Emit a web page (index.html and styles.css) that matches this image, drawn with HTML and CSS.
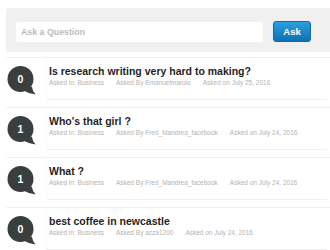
FILE: index.html
```html
<!DOCTYPE html>
<html lang="en">
<head>
    <meta charset="UTF-8">
    <meta name="viewport" content="width=device-width, initial-scale=1.0">
    <title>Questions</title>
    <link rel="stylesheet" href="styles.css">
</head>
<body>
    <div class="wrap">
        <form class="ask-box">
            <input type="text" class="ask-input" placeholder="Ask a Question">
            <button type="button" class="ask-btn">Ask</button>
        </form>

        <ul class="questions">
            <li class="question">
                <svg class="count" width="29" height="29" viewBox="0 0 29 29">
                    <circle cx="13.5" cy="13" r="13" fill="#3b3e3e"/>
                    <path d="M17 24.8 Q22.5 28.2 28.6 28.6 Q25.6 25.8 24.8 20.5 Z" fill="#3b3e3e"/>
                    <text x="13.5" y="16.8" text-anchor="middle">0</text>
                </svg>
                <div class="body">
                    <h2 class="title">Is research writing very hard to making?</h2>
                    <div class="meta">
                        <span>Asked in: Business</span>
                        <span>Asked By Emanuelmaruio</span>
                        <span>Asked on July 25, 2016</span>
                    </div>
                </div>
            </li>
            <li class="question">
                <svg class="count" width="29" height="29" viewBox="0 0 29 29">
                    <circle cx="13.5" cy="13" r="13" fill="#3b3e3e"/>
                    <path d="M17 24.8 Q22.5 28.2 28.6 28.6 Q25.6 25.8 24.8 20.5 Z" fill="#3b3e3e"/>
                    <text x="13.5" y="16.8" text-anchor="middle">1</text>
                </svg>
                <div class="body">
                    <h2 class="title">Who's that girl ?</h2>
                    <div class="meta">
                        <span>Asked in: Business</span>
                        <span>Asked By Fred_Mandrea_facebook</span>
                        <span>Asked on July 24, 2016</span>
                    </div>
                </div>
            </li>
            <li class="question">
                <svg class="count" width="29" height="29" viewBox="0 0 29 29">
                    <circle cx="13.5" cy="13" r="13" fill="#3b3e3e"/>
                    <path d="M17 24.8 Q22.5 28.2 28.6 28.6 Q25.6 25.8 24.8 20.5 Z" fill="#3b3e3e"/>
                    <text x="13.5" y="16.8" text-anchor="middle">1</text>
                </svg>
                <div class="body">
                    <h2 class="title">What ?</h2>
                    <div class="meta">
                        <span>Asked in: Business</span>
                        <span>Asked By Fred_Mandrea_facebook</span>
                        <span>Asked on July 24, 2016</span>
                    </div>
                </div>
            </li>
            <li class="question">
                <svg class="count" width="29" height="29" viewBox="0 0 29 29">
                    <circle cx="13.5" cy="13" r="13" fill="#3b3e3e"/>
                    <path d="M17 24.8 Q22.5 28.2 28.6 28.6 Q25.6 25.8 24.8 20.5 Z" fill="#3b3e3e"/>
                    <text x="13.5" y="16.8" text-anchor="middle">0</text>
                </svg>
                <div class="body">
                    <h2 class="title">best coffee in newcastle</h2>
                    <div class="meta">
                        <span>Asked in: Business</span>
                        <span>Asked By azza1200</span>
                        <span>Asked on July 24, 2016</span>
                    </div>
                </div>
            </li>
        </ul>
    </div>
</body>
</html>
```

FILE: styles.css
```css
html, body {
    margin: 0;
    padding: 0;
    background: #fff;
    overflow: hidden;
}
body {
    font-family: "Liberation Sans", Arial, sans-serif;
}
.wrap {
    padding: 8px 0 0 6px;
}
.ask-box {
    display: flex;
    align-items: flex-end;
    gap: 10px;
    margin: 0 -10px 5px 0;
    padding: 13px 0 10px 10px;
    background: #f0f0f0;
    border-radius: 3px;
}
.ask-input {
    width: 247px;
    height: 20px;
    box-sizing: border-box;
    padding: 0 5px;
    border: none;
    border-radius: 2px;
    background: #fff;
    font-family: inherit;
    font-size: 8.8px;
    font-weight: bold;
    outline: none;
}
.ask-input::placeholder {
    color: #bcbcbc;
}
.ask-btn {
    width: 38px;
    height: 21px;
    padding: 0;
    border: 1px solid #0d6aa8;
    border-radius: 3px;
    background: linear-gradient(#2ba0de, #0e70b2);
    color: #fff;
    font-family: inherit;
    font-size: 9.5px;
    font-weight: bold;
    cursor: pointer;
}
.questions {
    list-style: none;
    margin: 0;
    padding: 0;
}
.question {
    display: flex;
    align-items: flex-start;
    border-top: 1px solid #f1f1f1;
    padding-bottom: 7px;
}
.count {
    flex: none;
    margin: 8px 0 0 1px;
}
.count text {
    fill: #fff;
    font-family: "Liberation Sans", Arial, sans-serif;
    font-size: 10.5px;
    font-weight: bold;
}
.body {
    flex: 1;
    margin: 0 3px 0 10px;
    padding: 7px 0 12px 2px;
    border-left: 1px solid #fafafa;
    border-bottom: 1px solid #f1f1f1;
}
.title {
    margin: 0;
    font-size: 10.5px;
    line-height: 13px;
    font-weight: bold;
    color: #1f1f1f;
}
.meta {
    display: flex;
    gap: 12px;
    margin-top: 1px;
    font-size: 6.5px;
    line-height: 8px;
    color: #b3b3b3;
    white-space: nowrap;
}
```
